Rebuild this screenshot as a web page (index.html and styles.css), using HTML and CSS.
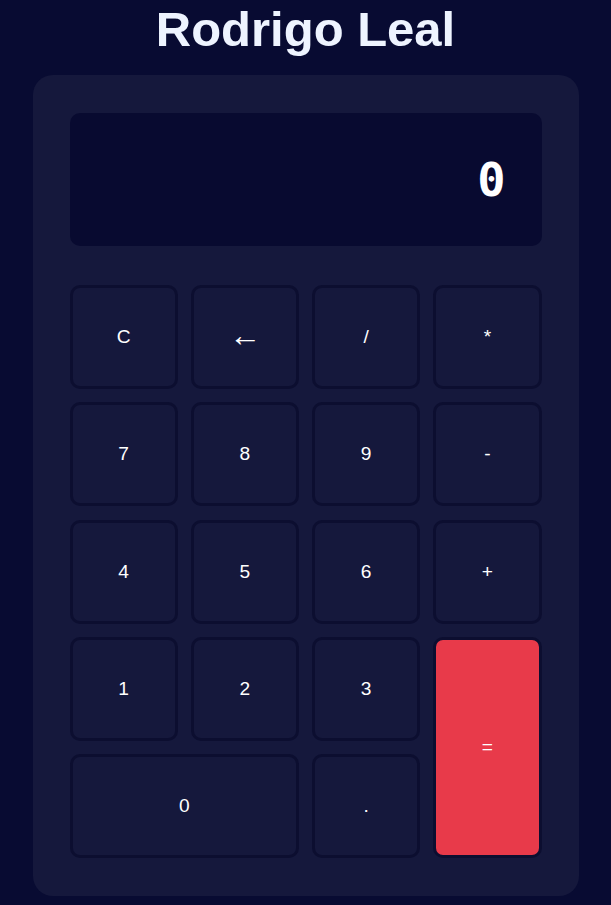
FILE: index.html
```html
<!DOCTYPE html>
<html lang="en">
<head>
<meta charset="utf-8">
<title>Calculator</title>
<link rel="stylesheet" href="styles.css">
</head>
<body>
  <h1 class="title">Rodrigo Leal</h1>
  <div class="calc">
    <div class="display">0</div>
    <div class="keys">
      <button class="key">C</button>
      <button class="key"><span class="arrow">←</span></button>
      <button class="key">/</button>
      <button class="key">*</button>
      <button class="key">7</button>
      <button class="key">8</button>
      <button class="key">9</button>
      <button class="key">-</button>
      <button class="key">4</button>
      <button class="key">5</button>
      <button class="key">6</button>
      <button class="key">+</button>
      <button class="key">1</button>
      <button class="key">2</button>
      <button class="key">3</button>
      <button class="key key-equals">=</button>
      <button class="key key-zero">0</button>
      <button class="key">.</button>
    </div>
  </div>
</body>
</html>
```
FILE: styles.css
```css
html, body {
  margin: 0;
  padding: 0;
}
body {
  background: #080b32;
  font-family: "Liberation Sans", Arial, sans-serif;
  color: #fff;
  display: flex;
  flex-direction: column;
  align-items: center;
}
.title {
  margin: 2px 0 18px;
  font-size: 49px;
  line-height: 55px;
  font-weight: bold;
  color: #eef4ff;
}
.calc {
  width: 546px;
  box-sizing: border-box;
  padding: 38px 37px;
  background: #15183c;
  border-radius: 20px;
}
.display {
  height: 133px;
  background: #080a30;
  border-radius: 10px;
  display: flex;
  align-items: center;
  justify-content: flex-end;
  padding: 0 36px;
  font-family: "DejaVu Sans Mono", monospace;
  font-weight: bold;
  font-size: 47px;
  color: #fff;
  margin-bottom: 39px;
}
.keys {
  display: grid;
  grid-template-columns: repeat(4, 1fr);
  grid-template-rows: repeat(5, 104px);
  column-gap: 13px;
  row-gap: 13.25px;
}
.key {
  background: #15183c;
  border: 3px solid #0c0e30;
  border-radius: 10px;
  color: #fff;
  font-family: "Liberation Sans", Arial, sans-serif;
  font-size: 19.2px;
  padding: 0;
  margin: 0;
}
.arrow {
  font-size: 32px;
  line-height: 1;
  vertical-align: 5px;
}
.key-equals {
  grid-column: 4;
  grid-row: 4 / span 2;
  background: #e83a4a;
}
.key-zero {
  grid-column: 1 / span 2;
}
```
